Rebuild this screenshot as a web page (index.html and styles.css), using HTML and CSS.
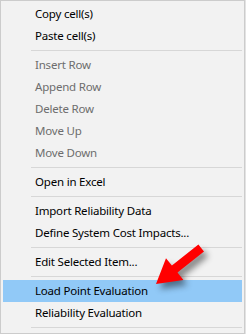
FILE: index.html
```html
<!DOCTYPE html>
<html lang="en">

<head>
    <meta charset="UTF-8">
    <title>Context menu</title>
    <link rel="stylesheet" href="styles.css">
</head>

<body>
    <div class="menu">
        <div class="item">Copy cell(s)</div>
        <div class="item">Paste cell(s)</div>
        <div class="sep"></div>
        <div class="item disabled">Insert Row</div>
        <div class="item disabled">Append Row</div>
        <div class="item disabled">Delete Row</div>
        <div class="item disabled">Move Up</div>
        <div class="item disabled">Move Down</div>
        <div class="sep"></div>
        <div class="item">Open in Excel</div>
        <div class="sep"></div>
        <div class="item">Import Reliability Data</div>
        <div class="item">Define System Cost Impacts...</div>
        <div class="sep"></div>
        <div class="item">Edit Selected Item...</div>
        <div class="sep"></div>
        <div class="item active">Load Point Evaluation</div>
        <div class="item">Reliability Evaluation</div>
        <div class="sep"></div>
    </div>

    <!-- red pointer drawn over the menu -->
    <svg class="pointer" width="246" height="334" viewBox="0 0 246 334">
        <polygon points="156,284 183.4,280 177.5,272.6 204,251.5 198.4,244.5 171.9,265.6 166,258.2" fill="#ff0000" />
    </svg>
</body>

</html>
```

FILE: styles.css
```css
html,
body {
    margin: 0;
    height: 100%;
    background-color: #e3e3e3;
    overflow: hidden;
}

body {
    position: relative;
    font-family: "Noto Sans", "Open Sans", sans-serif;
    font-size: 11.5px;
    letter-spacing: -0.2px;
    color: #000;
}

.menu {
    width: 239px;
    padding: 2px;
    border: 1px solid #cccccc;
    background-color: #f2f2f2;
}

.item {
    height: 22px;
    line-height: 22px;
    padding-left: 32px;
    white-space: nowrap;
}

.item.disabled {
    color: #6d6d6d;
}

.item.active {
    background-color: #91c9f7;
}

.sep {
    height: 1px;
    margin: 3px 0 3px 28px;
    background-color: #d7d7d7;
}

.pointer {
    position: absolute;
    top: 0;
    left: 0;
    pointer-events: none;
    filter: drop-shadow(4px 5px 3px rgba(0, 0, 0, 0.45));
}
```
